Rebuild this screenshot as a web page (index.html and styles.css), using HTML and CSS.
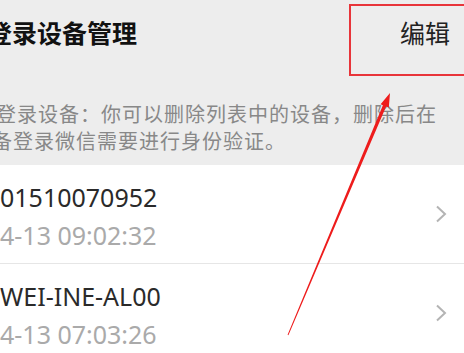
FILE: index.html
```html
<!DOCTYPE html>
<html lang="zh-CN">
<head>
    <meta charset="UTF-8">
    <meta name="viewport" content="width=device-width, initial-scale=1.0">
    <title>登录设备管理</title>
    <link rel="stylesheet" href="styles.css">
</head>
<body>

    <div class="screen">
        <div class="topbar">
            <span class="title">登录设备管理</span>
            <span class="edit">编辑</span>
        </div>

        <div class="notice">
            <span class="line first">登录设备：你可以删除列表中的设备，删除后在</span>
            <span class="line second">备登录微信需要进行身份验证。</span>
        </div>

        <div class="devices">
            <div class="device">
                <div class="info">
                    <div class="name">01510070952</div>
                    <div class="time">4-13 09:02:32</div>
                </div>
                <svg class="chevron" width="12" height="18" viewBox="0 0 12 18">
                    <polyline points="2,1.5 10,9 2,16.5" fill="none" stroke="#b4b4b4" stroke-width="2"/>
                </svg>
            </div>
            <div class="device">
                <div class="info">
                    <div class="name">WEI-INE-AL00</div>
                    <div class="time">4-13 07:03:26</div>
                </div>
                <svg class="chevron" width="12" height="18" viewBox="0 0 12 18">
                    <polyline points="2,1.5 10,9 2,16.5" fill="none" stroke="#b4b4b4" stroke-width="2"/>
                </svg>
            </div>
        </div>

        <!-- red annotation drawn over the screenshot -->
        <svg class="markup" width="464" height="353" viewBox="0 0 464 353">
            <rect x="350" y="5" width="130" height="70" fill="none" stroke="#e8353a" stroke-width="2"/>
            <polygon fill="#ee1c1c" points="287.6,334.8 382.9,105.2 380.6,104.2 390,93 388.8,107.6 386.1,106.6 288.4,335.2"/>
        </svg>
    </div>

</body>
</html>
```

FILE: styles.css
```css
body {
    margin: 0;
    background: #fff;
    font-family: "Noto Sans", "Noto Sans CJK SC", sans-serif;
}

.screen {
    position: relative;
    width: 464px;
    height: 353px;
    overflow: hidden;
}

.topbar {
    display: flex;
    justify-content: space-between;
    align-items: center;
    height: 64px;
    background: #ededed;
}

.title {
    margin-left: -13px;
    font-size: 25px;
    font-weight: bold;
    color: #111;
}

.edit {
    margin-right: 14px;
    font-size: 25px;
    color: #222;
}

.notice {
    height: 101px;
    box-sizing: border-box;
    padding-top: 37px;
    background: #ededed;
    color: #888;
    font-size: 20px;
    line-height: 27px;
    letter-spacing: 1px;
    white-space: nowrap;
}

.line {
    display: block;
}

.line.first {
    margin-left: -4px;
}

.line.second {
    margin-left: -8px;
}

.device {
    display: flex;
    align-items: center;
    justify-content: space-between;
    height: 98px;
    border-bottom: 1px solid #e6e6e6;
}

.info {
    align-self: flex-start;
    padding-top: 13px;
    font-size: 25px;
    line-height: 38px;
    white-space: nowrap;
}

.name {
    color: #2a2a2a;
}

.time {
    color: #aaa;
}

.chevron {
    margin-right: 17px;
}

.markup {
    position: absolute;
    top: 0;
    left: 0;
    pointer-events: none;
}
```
